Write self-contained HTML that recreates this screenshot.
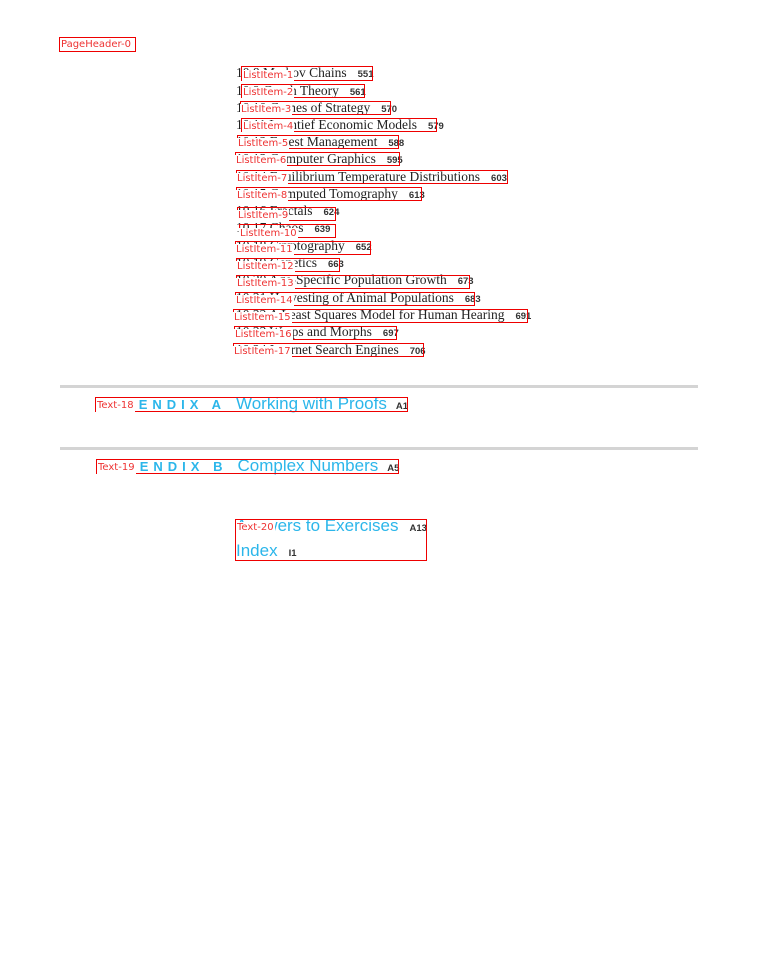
<!DOCTYPE html>
<html><head><meta charset="utf-8"><style>
body{margin:0;width:768px;height:960px;background:#fff;position:relative;overflow:hidden;font-family:"Liberation Serif",serif}
.t{position:absolute;font-size:13.5px;color:#222;white-space:nowrap;line-height:14px}
.t b{font-family:"Liberation Sans",sans-serif;font-size:9.5px;margin-left:11px;color:#333}
.bx{position:absolute;border:1px solid #e00;box-sizing:border-box}
.lb{position:absolute;font-family:"DejaVu Sans",sans-serif;font-size:10px;color:#e33;background:#fff;line-height:12px;padding:0 1px;white-space:nowrap}
.hr{position:absolute;left:60px;width:638px;height:3px;background:#d4d4d4}
.ap{position:absolute;font-family:"Liberation Sans",sans-serif;color:#2bb6ea;white-space:nowrap}
.ap i{font-style:normal;font-weight:bold;font-size:13px;letter-spacing:5px}
.ap span{font-size:17px;margin-left:10px}
.ap b{font-size:9.5px;color:#333;margin-left:9px}
</style></head><body>
<div class="t" style="left:128px;top:37px;font-size:10px">s</div>
<div class="bx" style="left:59px;top:37px;width:77px;height:15px"></div>
<div class="lb" style="left:60px;top:39px">PageHeader-0</div>

<div class="t" style="left:236px;top:66px">10.8 Markov Chains<b>551</b></div>
<div class="t" style="left:236px;top:84px">10.9 Graph Theory<b>561</b></div>
<div class="t" style="left:236px;top:101px">10.10 Games of Strategy<b>570</b></div>
<div class="t" style="left:236px;top:118px">10.11 Leontief Economic Models<b>579</b></div>
<div class="t" style="left:236px;top:135px">10.12 Forest Management<b>588</b></div>
<div class="t" style="left:236px;top:152px">10.13 Computer Graphics<b>595</b></div>
<div class="t" style="left:236px;top:170px">10.14 Equilibrium Temperature Distributions<b>603</b></div>
<div class="t" style="left:236px;top:187px">10.15 Computed Tomography<b>613</b></div>
<div class="t" style="left:236px;top:204px">10.16 Fractals<b>624</b></div>
<div class="t" style="left:236px;top:221px">10.17 Chaos<b>639</b></div>
<div class="t" style="left:236px;top:239px">10.18 Cryptography<b>652</b></div>
<div class="t" style="left:236px;top:256px">10.19 Genetics<b>663</b></div>
<div class="t" style="left:236px;top:273px">10.20 Age-Specific Population Growth<b>673</b></div>
<div class="t" style="left:236px;top:291px">10.21 Harvesting of Animal Populations<b>683</b></div>
<div class="t" style="left:236px;top:308px">10.22 A Least Squares Model for Human Hearing<b>691</b></div>
<div class="t" style="left:236px;top:325px">10.23 Warps and Morphs<b>697</b></div>
<div class="t" style="left:236px;top:343px">10.24 Internet Search Engines<b>706</b></div>

<div class="bx" style="left:241px;top:66px;width:132px;height:15px"></div><div class="lb" style="left:242px;top:70px">ListItem-1</div>
<div class="bx" style="left:241px;top:84px;width:124px;height:14px"></div><div class="lb" style="left:242px;top:87px">ListItem-2</div>
<div class="bx" style="left:240px;top:101px;width:151px;height:14px"></div><div class="lb" style="left:240px;top:104px">ListItem-3</div>
<div class="bx" style="left:241px;top:118px;width:196px;height:14px"></div><div class="lb" style="left:242px;top:121px">ListItem-4</div>
<div class="bx" style="left:237px;top:135px;width:162px;height:14px"></div><div class="lb" style="left:237px;top:138px">ListItem-5</div>
<div class="bx" style="left:235px;top:152px;width:165px;height:14px"></div><div class="lb" style="left:235px;top:155px">ListItem-6</div>
<div class="bx" style="left:236px;top:170px;width:272px;height:14px"></div><div class="lb" style="left:236px;top:173px">ListItem-7</div>
<div class="bx" style="left:236px;top:187px;width:186px;height:14px"></div><div class="lb" style="left:236px;top:190px">ListItem-8</div>
<div class="bx" style="left:237px;top:207px;width:99px;height:14px"></div><div class="lb" style="left:237px;top:210px">ListItem-9</div>
<div class="bx" style="left:239px;top:224px;width:97px;height:14px"></div><div class="lb" style="left:239px;top:228px">ListItem-10</div>
<div class="bx" style="left:235px;top:241px;width:136px;height:14px"></div><div class="lb" style="left:235px;top:244px">ListItem-11</div>
<div class="bx" style="left:236px;top:258px;width:104px;height:14px"></div><div class="lb" style="left:236px;top:261px">ListItem-12</div>
<div class="bx" style="left:236px;top:275px;width:234px;height:14px"></div><div class="lb" style="left:236px;top:278px">ListItem-13</div>
<div class="bx" style="left:235px;top:292px;width:240px;height:14px"></div><div class="lb" style="left:235px;top:295px">ListItem-14</div>
<div class="bx" style="left:233px;top:309px;width:295px;height:14px"></div><div class="lb" style="left:233px;top:312px">ListItem-15</div>
<div class="bx" style="left:234px;top:326px;width:163px;height:14px"></div><div class="lb" style="left:234px;top:329px">ListItem-16</div>
<div class="bx" style="left:233px;top:343px;width:191px;height:14px"></div><div class="lb" style="left:233px;top:346px">ListItem-17</div>

<div class="hr" style="top:385px"></div>
<div class="ap" style="left:97px;top:394px"><i>APPENDIX A</i><span>Working with Proofs</span><b>A1</b></div>
<div class="bx" style="left:95px;top:397px;width:313px;height:15px"></div><div class="lb" style="left:96px;top:400px">Text-18</div>

<div class="hr" style="top:447px"></div>
<div class="ap" style="left:98px;top:456px"><i>APPENDIX B</i><span>Complex Numbers</span><b>A5</b></div>
<div class="bx" style="left:96px;top:459px;width:303px;height:15px"></div><div class="lb" style="left:97px;top:462px">Text-19</div>

<div class="ap" style="left:236px;top:516px"><span style="margin:0">Answers to Exercises</span><b style="margin-left:11px">A13</b></div>
<div class="ap" style="left:236px;top:541px"><span style="margin:0">Index</span><b style="margin-left:11px">I1</b></div>
<div class="bx" style="left:235px;top:519px;width:192px;height:42px"></div><div class="lb" style="left:236px;top:522px">Text-20</div>
</body></html>
